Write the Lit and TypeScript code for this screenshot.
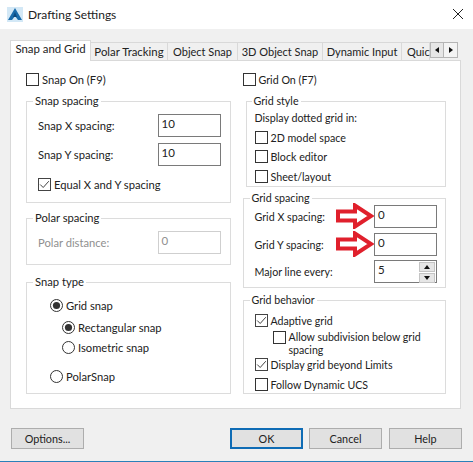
import { LitElement, html, css, svg } from "lit";
import { customElement } from "lit/decorators.js";

const arrow = svg`<svg class="arrow" width="40" height="26" viewBox="0 0 40 26"><path d="M3 8.5H20V2.5L36 13L20 23.5V17.5H3Z" fill="#fff" stroke="#e0202c" stroke-width="4" stroke-linejoin="miter"/></svg>`;

@customElement("app-root")
export class AppRoot extends LitElement {
  static styles = css`
    :host { display: block; width: 473px; height: 462px; }
    * { box-sizing: border-box; }
    .dialog { width: 473px; height: 462px; background: #f0f0f0; border-bottom: 1px solid #2a80b9; font: 11.2px Lato, "Liberation Sans", Arial, sans-serif; color: #222; display: flex; flex-direction: column; overflow: hidden; }
    .title { height: 29px; flex: none; background: #fff; display: flex; align-items: center; padding: 0 0 1px 7px; }
    .title .name { font-size: 12px; margin-left: 5px; color: #222; }
    .title .close { margin: 0 10px 1px auto; display: block; }
    .tabs { margin: 11px 0 0 10px; width: 451px; height: 21px; display: flex; align-items: flex-end; position: relative; flex: none; z-index: 1; font-size: 11px; }
    .tab { height: 19px; border: 1px solid #d9d9d9; border-left: 0; background: #f0f0f0; display: flex; align-items: center; justify-content: center; flex: none; white-space: nowrap; padding-bottom: 1px; }
    .tab.active { height: 21px; width: 81px; background: #fff; border-left: 1px solid #d9d9d9; border-bottom: 0; padding-bottom: 5px; font-size: 11.4px; }
    .w1 { width: 77px; font-size: 11.4px; } .w2 { width: 70px; } .w3 { width: 85px; } .w4 { width: 79px; }
    .tab.w5 { width: 28px; justify-content: flex-start; padding-left: 5px; overflow: visible; }
    .scroll { display: flex; height: 16px; align-self: flex-end; margin-bottom: 3px; position: relative; }
    .scroll span { width: 14px; height: 16px; background: #e6e6e6; border: 1px solid #b5b5b5; display: flex; align-items: center; justify-content: center; }
    .scroll span + span { border-left: 0; background: #f4f4f4; }
    .tri-l { width: 0; height: 0; border: 3px solid transparent; border-left: 0; border-right: 4px solid #111; }
    .tri-r { width: 0; height: 0; border: 3px solid transparent; border-right: 0; border-left: 4px solid #111; }
    .page { margin: -1px 0 0 10px; width: 451px; height: 349px; flex: none; background: #fff; border: 1px solid #d9d9d9; padding: 12px 14px 0 15px; display: flex; justify-content: space-between; }
    .col { display: flex; flex-direction: column; }
    .col.left { width: 205px; }
    .col.right { width: 204px; margin-left: 12px; font-size: 10.7px; }
    .group { position: relative; border: 1px solid #dcdcdc; flex: none; display: flex; flex-direction: column; }
    .legend { position: absolute; top: -9px; left: 6px; background: #fff; padding: 0 2px; line-height: 16px; white-space: nowrap; }
    .row { display: flex; align-items: center; height: 13px; white-space: nowrap; flex: none; }
    .field { display: flex; align-items: center; height: 23px; flex: none; justify-content: space-between; }
    .input { width: 63px; height: 23px; border: 1px solid #7a7a7a; background: #fff; padding: 1px 0 0 3px; line-height: 15px; position: relative; font-size: 11.5px; }
    .disabled { color: #8f8f8f; }
    .disabled .input { border-color: #cfcfcf; background: #fff; }
    .box { width: 13px; height: 13px; border: 1px solid #333; margin-right: 3px; flex: none; display: block; background: #fff; }
    .box.on { border-color: #444; }
    .radio { display: block; flex: none; margin-right: 3px; }
    .g-snap { height: 102px; margin-top: 15px; padding: 12px 9px 0 11px; }
    .g-polar { height: 47px; margin-top: 15px; padding: 12px 9px 0 11px; }
    .g-type { height: 112px; margin-top: 17px; padding: 16px 0 0 23px; }
    .m4 { margin-top: 4px; } .m5 { margin-top: 5px; } .m6 { margin-top: 6px; } .m7 { margin-top: 7px; } .m9 { margin-top: 9px; } .m12 { margin-top: 12px; } .m16 { margin-top: 16px; } .m0 { margin-top: 0; }
    .in12 { margin-left: 12px; }
    .g-style { height: 86px; margin: 15px 0 0 3px; padding: 9px 0 0 8px; }
    .g-style .legend { left: 5px; }
    .g-spacing { height: 90px; margin-top: 11px; padding: 6px 8px 0 11px; }
    .g-spacing .field { position: relative; }
    .arrow { position: absolute; left: 80px; top: -2px; }
    .g-behavior { height: 94px; margin-top: 12px; padding: 13px 0 0 11px; font-size: 10.6px; }
    .wrap { white-space: normal; display: block; line-height: 13px; }
    .sub { display: flex; align-items: flex-start; margin: 4px 0 0 18px; height: 27px; flex: none; }
    .spin { position: absolute; right: 1px; top: 1px; width: 16px; height: 21px; display: flex; flex-direction: column; gap: 1px; }
    .spin span { flex: 1; background: #e6e6e6; border: 1px solid #c4c4c4; display: flex; align-items: center; justify-content: center; }
    .tri-u { width: 0; height: 0; border: 3px solid transparent; border-top: 0; border-bottom: 4px solid #111; }
    .tri-d { width: 0; height: 0; border: 3px solid transparent; border-bottom: 0; border-top: 4px solid #111; }
    .buttons { display: flex; margin: 19px 0 0 11px; flex: none; font-size: 10.8px; }
    .btn { width: 73px; height: 21px; border: 1px solid #adadad; background: #e1e1e1; display: flex; align-items: center; justify-content: center; flex: none; }
    .btn.ok { margin-left: 146px; border: 2px solid #0f6cb5; }
    .btn.cancel { margin-left: 6px; }
    .btn.help { margin-left: 7px; }
  `;

  private box(on = false) {
    return html`<svg class="box ${on ? "on" : ""}" viewBox="0 0 11 11">${on ? svg`<path d="M1.2 5.5L4.2 8.5L9.8 2.2" fill="none" stroke="#444" stroke-width="1"/>` : ""}</svg>`;
  }
  private radio(on = false) {
    return html`<svg class="radio" width="13" height="13" viewBox="0 0 13 13"><circle cx="6.5" cy="6.5" r="6" fill="#fff" stroke="#333"/>${on ? svg`<circle cx="6.5" cy="6.5" r="3.6" fill="#333"/>` : ""}</svg>`;
  }

  render() {
    return html`<div class="dialog">
      <div class="title">
        <svg width="16" height="15" viewBox="0 0 16 15"><rect width="16" height="15" fill="#d3e8f6"/><path d="M8 1L15 13H11L8 9L5 13H1Z" fill="#1a6cab"/><path d="M8 5L10 10H6Z" fill="#0b4a80"/></svg>
        <span class="name">Drafting Settings</span>
        <svg class="close" width="10" height="10" viewBox="0 0 10 10"><path d="M0 0L10 10M10 0L0 10" stroke="#222" stroke-width="1" fill="none"/></svg>
      </div>
      <div class="tabs">
        <div class="tab active">Snap and Grid</div>
        <div class="tab w1">Polar Tracking</div>
        <div class="tab w2">Object Snap</div>
        <div class="tab w3">3D Object Snap</div>
        <div class="tab w4">Dynamic Input</div>
        <div class="tab w5">Quic</div>
        <div class="scroll"><span><i class="tri-l"></i></span><span><i class="tri-r"></i></span></div>
      </div>
      <div class="page">
        <div class="col left">
          <div class="row">${this.box()}Snap On (F9)</div>
          <div class="group g-snap">
            <div class="legend">Snap spacing</div>
            <div class="field"><span>Snap X spacing:</span><div class="input">10</div></div>
            <div class="field m6"><span>Snap Y spacing:</span><div class="input">10</div></div>
            <div class="row m12">${this.box(true)}Equal X and Y spacing</div>
          </div>
          <div class="group g-polar">
            <div class="legend">Polar spacing</div>
            <div class="field disabled"><span>Polar distance:</span><div class="input">0</div></div>
          </div>
          <div class="group g-type">
            <div class="legend">Snap type</div>
            <div class="row">${this.radio(true)}Grid snap</div>
            <div class="row m9 in12">${this.radio(true)}Rectangular snap</div>
            <div class="row m7 in12">${this.radio()}Isometric snap</div>
            <div class="row m16">${this.radio()}PolarSnap</div>
          </div>
        </div>
        <div class="col right">
          <div class="row">${this.box()}Grid On (F7)</div>
          <div class="group g-style">
            <div class="legend">Grid style</div>
            <div class="row">Display dotted grid in:</div>
            <div class="row m7">${this.box()}2D model space</div>
            <div class="row m6">${this.box()}Block editor</div>
            <div class="row m7">${this.box()}Sheet/layout</div>
          </div>
          <div class="group g-spacing">
            <div class="legend">Grid spacing</div>
            <div class="field"><span>Grid X spacing:</span>${arrow}<div class="input">0</div></div>
            <div class="field m5"><span>Grid Y spacing:</span>${arrow}<div class="input">0</div></div>
            <div class="field m4"><span>Major line every:</span><div class="input">5<div class="spin"><span><i class="tri-u"></i></span><span><i class="tri-d"></i></span></div></div></div>
          </div>
          <div class="group g-behavior">
            <div class="legend">Grid behavior</div>
            <div class="row">${this.box(true)}Adaptive grid</div>
            <div class="sub">${this.box()}<span class="wrap">Allow subdivision below grid<br />spacing</span></div>
            <div class="row m0">${this.box(true)}Display grid beyond Limits</div>
            <div class="row m7">${this.box()}Follow Dynamic UCS</div>
          </div>
        </div>
      </div>
      <div class="buttons">
        <div class="btn">Options...</div>
        <div class="btn ok">OK</div>
        <div class="btn cancel">Cancel</div>
        <div class="btn help">Help</div>
      </div>
    </div>`;
  }
}
